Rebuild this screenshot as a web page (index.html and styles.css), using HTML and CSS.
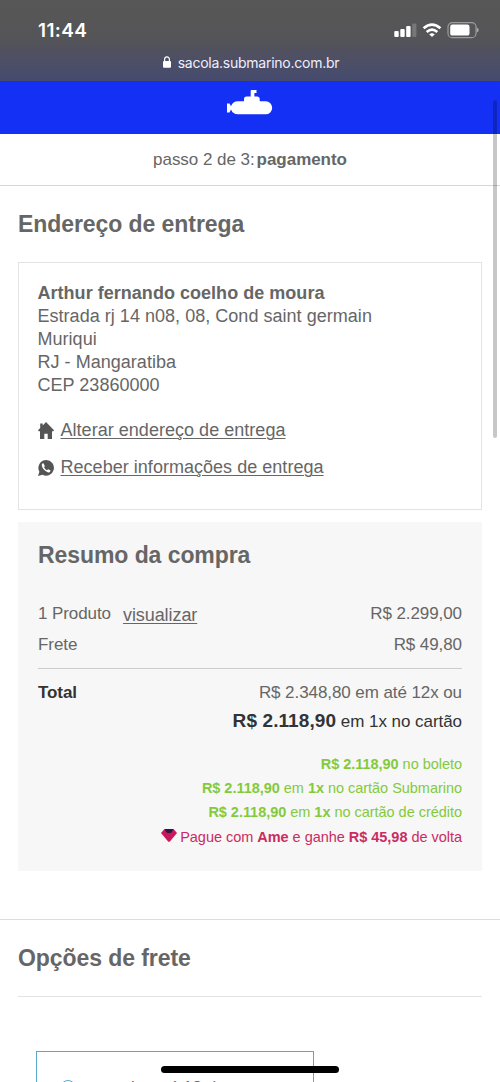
FILE: index.html
```html
<!DOCTYPE html>
<html lang="pt-BR">
<head>
<meta charset="utf-8">
<title>Pagamento</title>
<link rel="stylesheet" href="styles.css">
</head>
<body>
<div class="screen">
  <div class="chrome">
    <div class="status">
      <span class="time">11:44</span>
      <svg class="status-icons" width="86" height="18" viewBox="0 0 86 18">
        <g fill="#fff">
          <rect x="0.3" y="9" width="4.4" height="6" rx="1"/>
          <rect x="6.3" y="7" width="4.4" height="8" rx="1"/>
          <rect x="12.2" y="4" width="4.4" height="11" rx="1"/>
          <rect x="18.2" y="1.5" width="4.2" height="13.5" rx="1" opacity=".2"/>
          <path d="M38 14.9l-2.8-2.6q2.8-2.2 5.6 0z"/>
          <rect x="56.2" y="2.6" width="19.3" height="11" rx="2.2"/>
          <path d="M82.8 5.6q1.9.8 1.9 2.5t-1.9 2.5z" opacity=".5"/>
        </g>
        <g fill="none" stroke="#fff" stroke-width="2.7">
          <path d="M29.6 6.3q8.4-7.4 16.8 0"/>
          <path d="M32.7 10q5.3-4.6 10.6 0"/>
        </g>
        <rect x="54" y=".6" width="28" height="15" rx="4.2" fill="none" stroke="#fff" stroke-opacity=".42" stroke-width="1.2"/>
      </svg>
    </div>
    <div class="url">
      <svg width="8" height="12" viewBox="0 0 8 12"><rect y="5" width="8" height="6.7" rx="1" fill="#fff"/><path d="M1.6 5.5V3.4a2.4 2.6 0 0 1 4.8 0v2.1" fill="none" stroke="#fff" stroke-width="1.2"/></svg>
      <span>sacola.submarino.com.br</span>
    </div>
  </div>
  <header class="brand">
    <svg width="46" height="26" viewBox="0 0 46 26" fill="#fff">
      <path d="M0 13.5h2.5l1.5 2.8Q5.8 11.3 11 11.3h6V9q0-2.5 2.5-2.5H23.7V.8q0-.8.8-.8h5v2.9h-2.1V6.5H30q2.7 0 2.7 2.5v2.3h6a6.5 6.5 0 0 1 0 13H11q-5.2 0-7-4.8L2.5 22.5H0z"/>
    </svg>
  </header>
  <div class="step"><span>passo 2 de 3:</span><b>pagamento</b></div>
  <section class="delivery">
    <h2>Endereço de entrega</h2>
    <div class="address">
      <b>Arthur fernando coelho de moura</b>
      <p>Estrada rj 14 n08, 08, Cond saint germain</p>
      <p>Muriqui</p>
      <p>RJ - Mangaratiba</p>
      <p>CEP 23860000</p>
      <div class="action">
        <svg width="16" height="17" viewBox="0 0 16 17" fill="#555"><path d="M8 0l8 8.3-.7.9H14V17H9.7v-5.2H6.3V17H2V9.2H.7L0 8.3 2.2 6V1.6h2.5v1.8z"/></svg>
        <a>Alterar endereço de entrega</a>
      </div>
      <div class="action">
        <svg width="16" height="18" viewBox="0 0 16 18"><path d="M8.2 1a7.8 7.8 0 1 1-3.7 14.7L0 17l1.4-4.2A7.9 7.9 0 0 1 8.2 1z" fill="#555"/><path d="M5.2 4.1q-1.8.7-1.4 2.7 1.3 4.9 6.4 6.6 2 .3 2.4-1.8l-2.4-1.3-1.3 1q-2-.9-2.8-3l.8-1.2z" fill="#fff"/></svg>
        <a>Receber informações de entrega</a>
      </div>
    </div>
  </section>
  <section class="summary">
    <h2>Resumo da compra</h2>
    <div class="row product"><span>1 Produto</span><a>visualizar</a><span class="value">R$ 2.299,00</span></div>
    <div class="row freight"><span>Frete</span><span class="value">R$ 49,80</span></div>
    <div class="row total"><b>Total</b><span class="value">R$ 2.348,80 em até 12x ou</span></div>
    <div class="cash"><b>R$ 2.118,90</b> em 1x no cartão</div>
    <div class="offers">
      <p><b>R$ 2.118,90</b> no boleto</p>
      <p><b>R$ 2.118,90</b> em <b>1x</b> no cartão Submarino</p>
      <p><b>R$ 2.118,90</b> em <b>1x</b> no cartão de crédito</p>
      <p class="ame"><svg width="16" height="13" viewBox="0 0 16 13"><path d="M3.5 0h9L16 4 8.9 12.4q-.9.8-1.8 0L0 4z" fill="#cb1859"/><path d="M3.6 0h8.8l-1.7 3.2Q8 5 5.3 3.2z" fill="#2b1748"/></svg>Pague com <b>Ame</b> e ganhe <b>R$ 45,98</b> de volta</p>
    </div>
  </section>
  <section class="shipping">
    <h2>Opções de frete</h2>
    <div class="option"><i class="radio"></i><span>receba até 13 de</span></div>
  </section>
  <div class="scrollbar"></div>
  <div class="home-bar"></div>
</div>
</body>
</html>
```

FILE: styles.css
```css
* { box-sizing: border-box; }
body { margin: 0; background: #fff; color: #666; font-family: "Liberation Sans", Arial, sans-serif; }
h2, p { margin: 0; }
h2 { font-size: 23px; line-height: 28px; color: #666; letter-spacing: -0.07px; }
a { text-decoration: underline; text-decoration-thickness: 1px; text-underline-offset: 2px; font-size: 18px; }
.screen { position: relative; height: 1082px; overflow: hidden; }
.chrome { height: 81px; padding-top: 19px; background: linear-gradient(#575757 0, #555557 36px, #4f5062 56px, #454b70 81px); color: #fff; font-family: Inter, sans-serif; }
.status { display: flex; justify-content: space-between; height: 33px; padding: 0 20px 0 38px; }
.time { font-size: 19px; font-weight: 600; line-height: 23px; letter-spacing: 0.35px; }
.status-icons { margin-top: 3px; }
.url { display: flex; align-items: center; justify-content: center; gap: 7px; height: 20px; font-size: 14px; letter-spacing: -0.25px; color: #eef; padding-left: 2px; }
.brand { display: flex; justify-content: center; height: 53px; padding-top: 9px; background: #1430f5; }
.step { display: flex; justify-content: center; gap: 2px; height: 52px; border-bottom: 1px solid #d6d6d6; font-size: 17px; line-height: 52px; letter-spacing: -0.04px; }
.delivery { padding: 24px 18px 0; }
.address { height: 248px; margin-top: 24px; padding: 19px 18.5px; border: 1px solid #e3e3e3; font-size: 18px; line-height: 23px; letter-spacing: 0.03px; }
.address > b { display: block; }
.action { display: flex; align-items: center; gap: 7px; margin-top: 22px; }
.action + .action { margin-top: 14px; }
.summary { height: 349px; margin: 12px 18px 0; padding: 19px 20px 0; background: #f7f7f7; font-size: 17px; }
.row { display: flex; align-items: center; height: 31px; letter-spacing: -0.08px; }
.value { margin-left: auto; }
.product { margin-top: 29px; }
.product a { margin: 4px 0 0 12px; }
.freight { height: 40px; padding-bottom: 8px; border-bottom: 1px solid #ccc; }
.total { height: 48px; }
.total b { color: #333; }
.cash { color: #333; text-align: right; line-height: 20px; margin-top: -6px; }
.cash b { font-size: 19px; letter-spacing: 0.1px; }
.cash { letter-spacing: -0.05px; }
.offers { margin-top: 20px; font-size: 14.5px; line-height: 24.2px; letter-spacing: -0.03px; text-align: right; color: #83ca3b; }
.ame { color: #cb2b62; }
.ame svg { margin-right: 3px; }
.shipping { margin-top: 48px; border-top: 1px solid #ddd; }
.shipping h2 { height: 53px; margin: 24px 18px 0; border-bottom: 1px solid #e3e3e3; }
.option { display: flex; gap: 22px; width: 278px; height: 80px; margin: 54px 0 0 36px; padding: 26px 23px; border: 1px solid #58a9cf; font-size: 17px; line-height: 20px; }
.radio { width: 16px; height: 16px; margin-top: 2px; border: 1px solid #58a9cf; border-radius: 50%; }
.scrollbar { position: absolute; left: 493px; top: 100px; width: 4px; height: 338px; border-radius: 2px; background: rgba(0, 0, 0, .22); }
.home-bar { position: absolute; left: 161px; top: 1066px; width: 178px; height: 7px; border-radius: 4px; background: #000; }
```
